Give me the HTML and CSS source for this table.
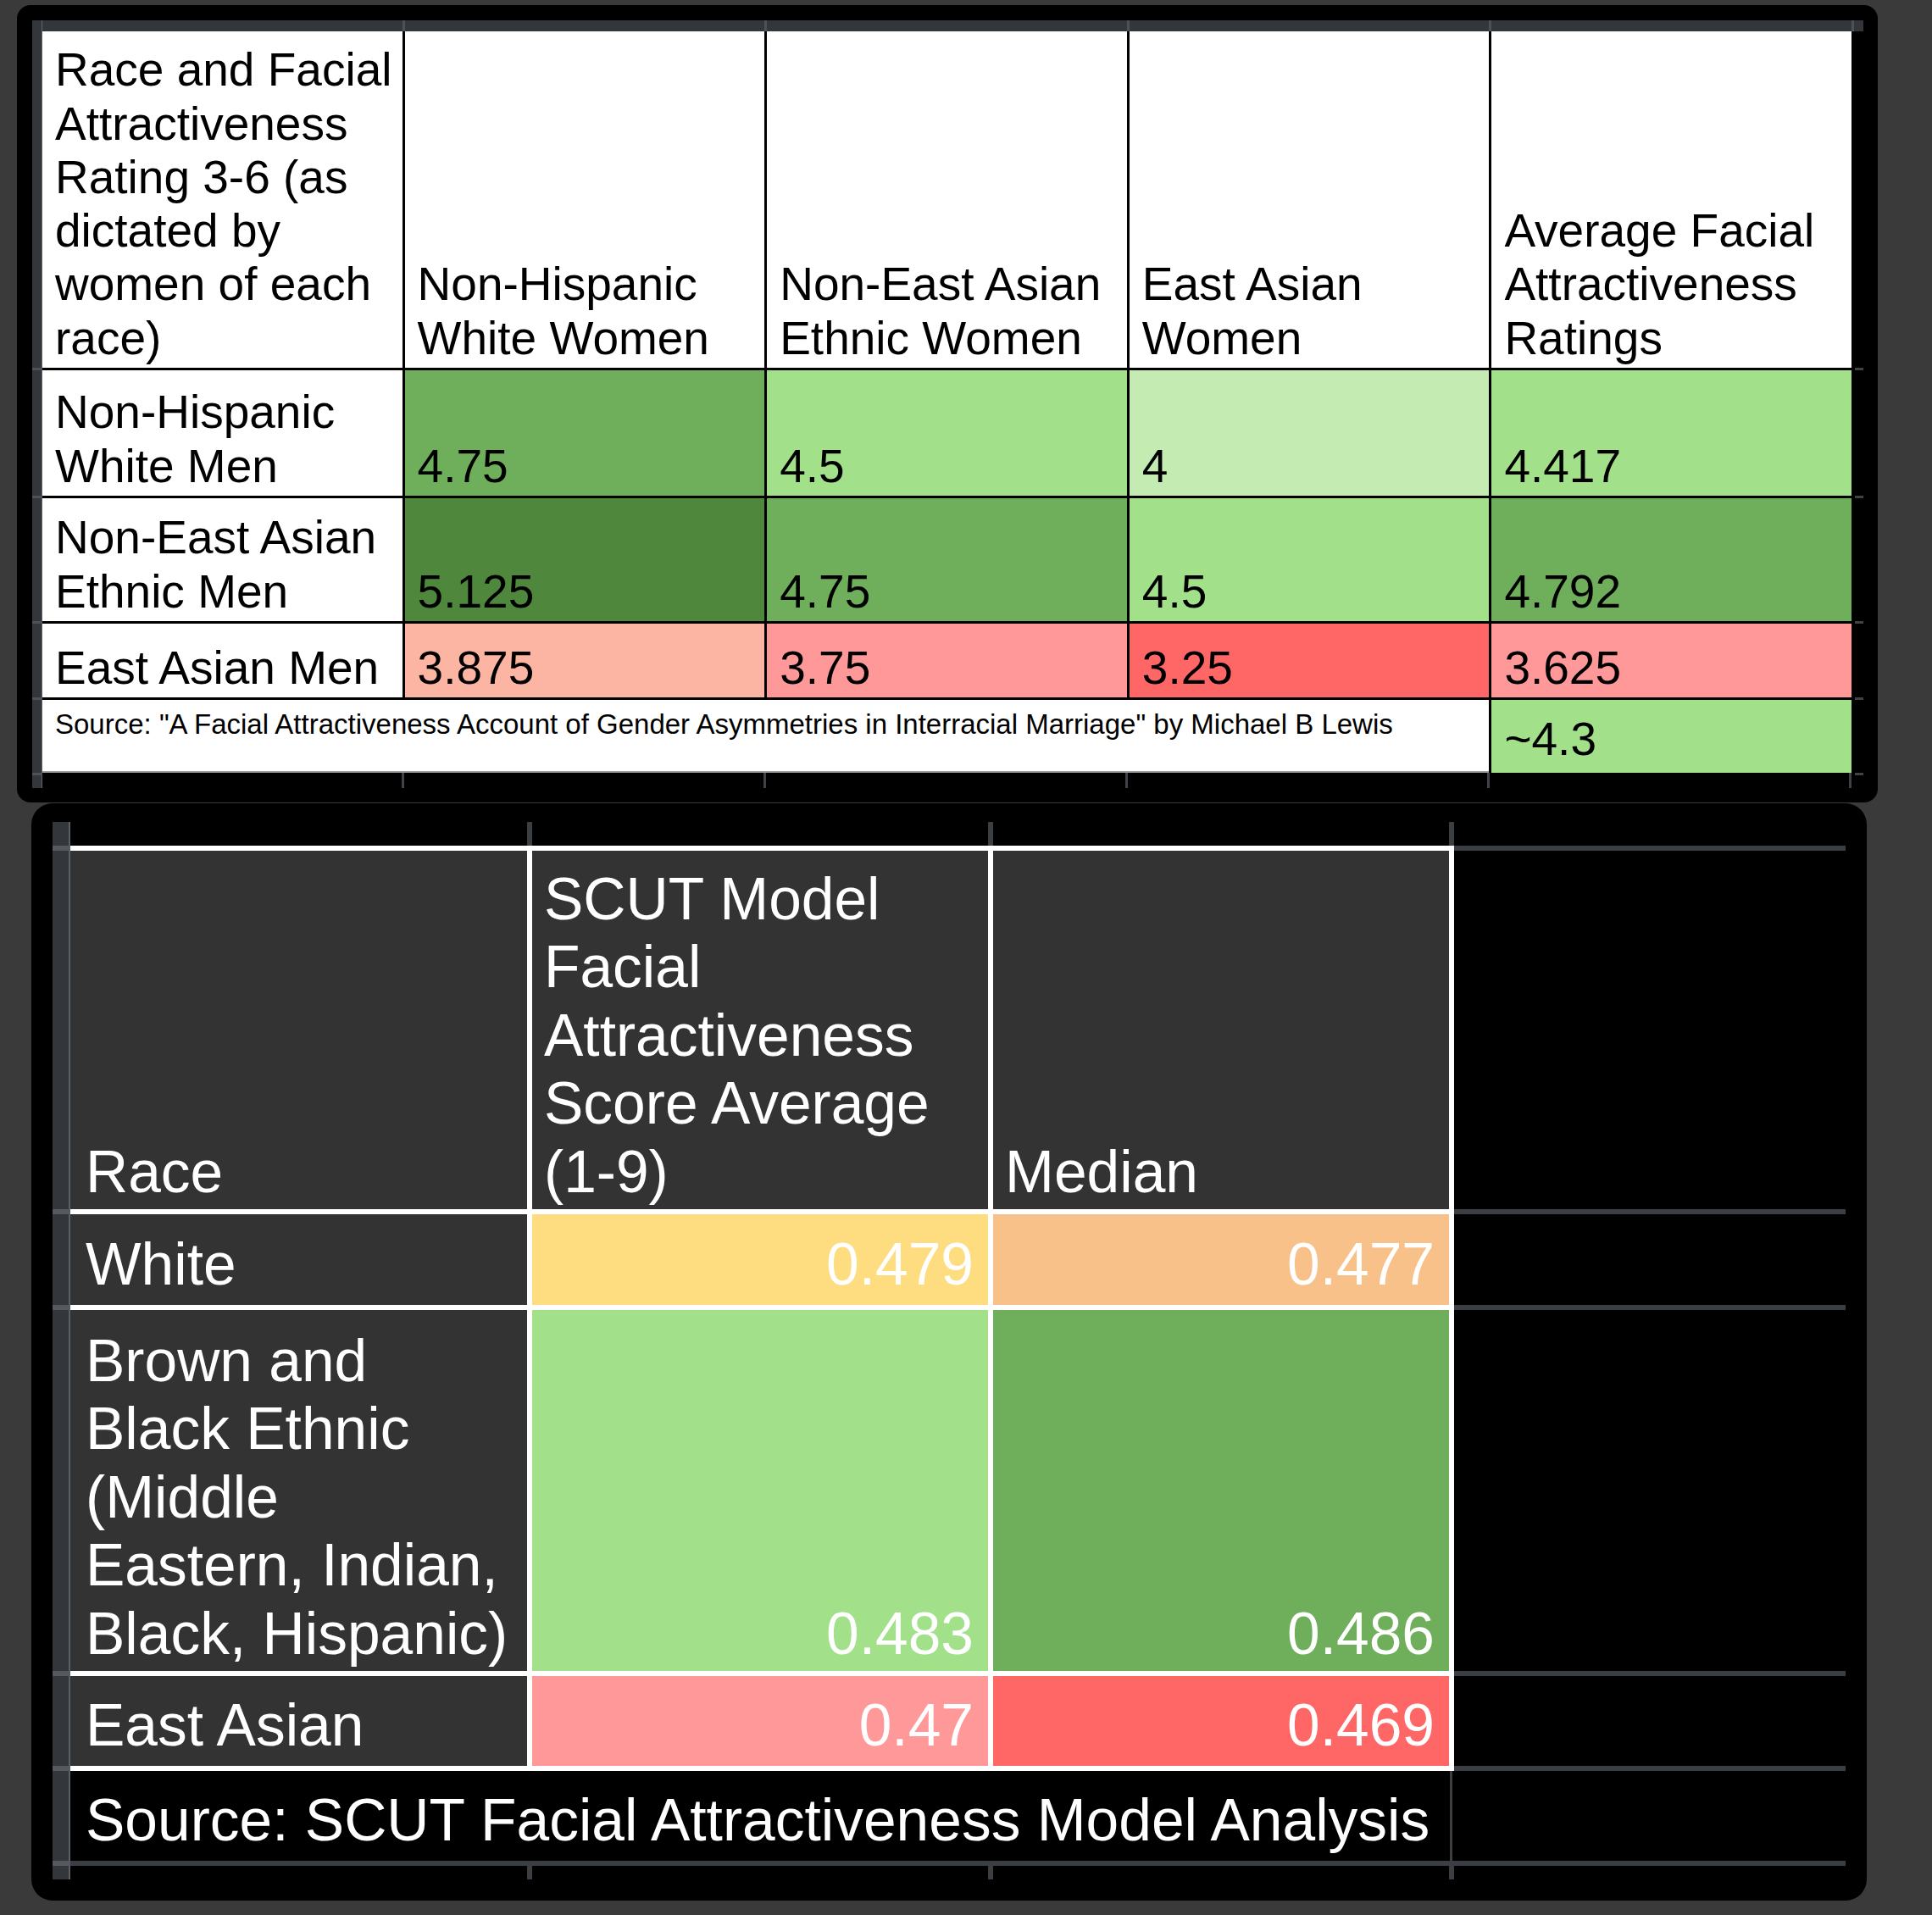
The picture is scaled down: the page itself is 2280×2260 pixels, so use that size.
FILE: index.html
```html
<!DOCTYPE html>
<html lang="en">
<head>
<meta charset="utf-8">
<title>Race and Facial Attractiveness</title>
<link rel="stylesheet" href="styles.css">
</head>
<body>
<div class="page">
  <section class="panel panel-top">
    <div class="sheet">
      <div class="corner"></div>
      <div class="colhead"><span></span><span></span><span></span><span></span><span></span><span></span></div>
      <div class="rowhead"><span></span><span></span><span></span><span></span><span></span><span></span></div>
      <div class="grid-a">
        <div>Race and Facial<br>Attractiveness<br>Rating 3-6 (as<br>dictated by<br>women of each<br>race)</div>
        <div>Non-Hispanic<br>White Women</div>
        <div>Non-East Asian<br>Ethnic Women</div>
        <div>East Asian<br>Women</div>
        <div>Average Facial<br>Attractiveness<br>Ratings</div>

        <div>Non-Hispanic<br>White Men</div>
        <div class="g2">4.75</div>
        <div class="g3">4.5</div>
        <div class="g4">4</div>
        <div class="g3">4.417</div>

        <div>Non-East Asian<br>Ethnic Men</div>
        <div class="g1">5.125</div>
        <div class="g2">4.75</div>
        <div class="g3">4.5</div>
        <div class="g2">4.792</div>

        <div>East Asian Men</div>
        <div class="r3">3.875</div>
        <div class="r2">3.75</div>
        <div class="r1">3.25</div>
        <div class="r2">3.625</div>

        <div class="src">Source: "A Facial Attractiveness Account of Gender Asymmetries in Interracial Marriage" by Michael B Lewis</div>
        <div class="g3 approx">~4.3</div>
      </div>
      <div class="rticks"><span></span><span></span><span></span><span></span><span></span><span></span></div>
      <div class="bticks"><span></span><span></span><span></span><span></span><span></span></div>
    </div>
  </section>

  <section class="panel panel-bottom">
    <div class="bsheet">
      <div class="bstrip"><span></span><span></span><span></span><span></span><span></span><span></span><span></span></div>
      <div class="bmain">
        <div class="ticks tall"><span></span><span></span><span></span><span></span></div>
        <div class="bbody">
          <div class="grid-b">
            <div class="first">Race</div>
            <div>SCUT Model<br>Facial<br>Attractiveness<br>Score Average<br>(1-9)</div>
            <div>Median</div>

            <div class="one first">White</div>
            <div class="one num y1">0.479</div>
            <div class="one num o1">0.477</div>

            <div class="first">Brown and<br>Black Ethnic<br>(Middle<br>Eastern, Indian,<br>Black, Hispanic)</div>
            <div class="num g3">0.483</div>
            <div class="num g2">0.486</div>

            <div class="one first">East Asian</div>
            <div class="one num r2">0.47</div>
            <div class="one num r1">0.469</div>
          </div>
          <div class="emptycol"><span></span><span></span><span></span><span></span></div>
        </div>
        <div class="bsource">
          <div class="bsrc-text">Source: SCUT Facial Attractiveness Model Analysis</div>
          <div class="bsrc-empty"></div>
        </div>
        <div class="ticks short"><span></span><span></span><span></span><span></span></div>
      </div>
    </div>
  </section>
</div>
</body>
</html>
```

FILE: styles.css
```css
* { box-sizing: border-box; }

html, body {
  margin: 0;
  padding: 0;
  background: #3a3a3a;
}

body {
  width: 2280px;
  height: 2260px;
  overflow: hidden;
  font-family: "Liberation Sans", Arial, sans-serif;
}

.page {
  padding-top: 6px;
}

.panel {
  background: #000;
}

/* ---------- top panel ---------- */
.panel-top {
  margin-left: 20px;
  width: 2196px;
  height: 941px;
  border-radius: 16px;
  padding: 18px 0 0 18px;
}

.sheet {
  display: grid;
  grid-template-columns: 12px 2135px 14px;
  grid-template-rows: 13px 875px 18px;
}

.corner {
  grid-column: 1;
  grid-row: 1;
  background: #33363a;
  border-right: 1px solid #60656b;
}

.colhead {
  grid-column: 2 / 4;
  grid-row: 1;
  display: grid;
  grid-template-columns: repeat(5, 1fr) 11px;
  column-gap: 3px;
  background: #4d5258;
}
.colhead span { background: #33363a; }

.rowhead {
  grid-column: 1;
  grid-row: 2 / 4;
  display: grid;
  grid-template-rows: 397px 148px 145px 87px 86px 1fr;
  row-gap: 3px;
  background: #4d5258;
}
.rowhead span {
  background: #33363a;
  border-right: 1px solid #60656b;
}

.grid-a {
  grid-column: 2;
  grid-row: 2;
  display: grid;
  grid-template-columns: repeat(5, 1fr);
  grid-template-rows: 397px 148px 145px 87px 86px;
  gap: 3px;
  background: #000;
  font-size: 55px;
  line-height: 63.3px;
  color: #000;
}
.grid-a > div {
  background: #fff;
  display: flex;
  flex-direction: column;
  justify-content: flex-end;
  padding: 0 8px 3px 15px;
  white-space: nowrap;
}
.grid-a > .src {
  grid-column: span 4;
  justify-content: flex-start;
  font-size: 33px;
  line-height: 37px;
  padding-top: 10px;
  border-bottom: 2px solid #9c9c9c;
}
.grid-a > .approx { padding-bottom: 8px; }

.rticks {
  grid-column: 3;
  grid-row: 2 / 4;
  display: grid;
  grid-template-rows: 397px 148px 145px 87px 86px 1fr;
  row-gap: 3px;
  margin-left: 4px;
  background: #3f4348;
}
.rticks span { background: #000; }

.bticks {
  grid-column: 2;
  grid-row: 3;
  display: grid;
  grid-template-columns: repeat(5, 1fr);
  column-gap: 3px;
  border-right: 3px solid #3f4348;
  background: #3f4348;
}
.bticks span { background: #000; }

/* ---------- colours ---------- */
.g1 { background: #4f873c !important; }
.g2 { background: #6fae5a !important; }
.g3 { background: #a2e08a !important; }
.g4 { background: #c4ebb2 !important; }
.r1 { background: #ff6666 !important; }
.r2 { background: #ff9999 !important; }
.r3 { background: #fdb5a3 !important; }
.y1 { background: #fddd7f !important; }
.o1 { background: #f8c189 !important; }

/* ---------- bottom panel ---------- */
.panel-bottom {
  margin-left: 37px;
  margin-top: 1px;
  width: 2166px;
  height: 1295px;
  border-radius: 25px;
  padding: 22px 0 0 25px;
}

.bsheet {
  display: flex;
}

.bstrip {
  width: 21px;
  display: grid;
  grid-template-rows: 28px 423px 107px 426px 106px 106px 16px;
  row-gap: 6px;
  background: #555a60;
}
.bstrip span {
  background: #33363a;
  border-right: 2px solid #5a5f66;
}

.bmain {
  width: 2095px;
  display: flex;
  flex-direction: column;
}

.ticks {
  display: grid;
  grid-template-columns: 539px 538px 538px 462px;
  column-gap: 6px;
  background: #3b3e43;
}
.ticks span { background: #000; }
.ticks.tall { height: 28px; }
.ticks.short { height: 16px; }

.bbody {
  display: flex;
}

.grid-b {
  display: grid;
  grid-template-columns: 539px 538px 538px;
  grid-template-rows: 423px 107px 426px 106px;
  gap: 6px;
  background: #fff;
  border: 6px solid #fff;
  border-left: 0;
  font-size: 69.5px;
  line-height: 80.5px;
  color: #fff;
}
.grid-b > div {
  background: #333333;
  display: flex;
  flex-direction: column;
  justify-content: flex-end;
  padding: 0 17px 4px 14px;
  white-space: nowrap;
}
.grid-b > .first { padding-left: 18px; }
.grid-b > .one { padding-bottom: 8px; }
.grid-b > .num { align-items: flex-end; }

.emptycol {
  width: 462px;
  display: grid;
  grid-template-rows: 423px 107px 426px 106px;
  row-gap: 6px;
  border-top: 6px solid #3b3e43;
  border-bottom: 6px solid #3b3e43;
  background: #3b3e43;
}
.emptycol span { background: #000; }

.bsource {
  display: grid;
  grid-template-columns: 1631px 1fr;
  height: 112px;
  border-bottom: 6px solid #3b3e43;
}
.bsrc-text {
  display: flex;
  align-items: flex-end;
  padding: 0 0 8px 18px;
  border-right: 3px solid #3b3e43;
  font-size: 69.5px;
  line-height: 80.5px;
  color: #fff;
  white-space: nowrap;
}
```
